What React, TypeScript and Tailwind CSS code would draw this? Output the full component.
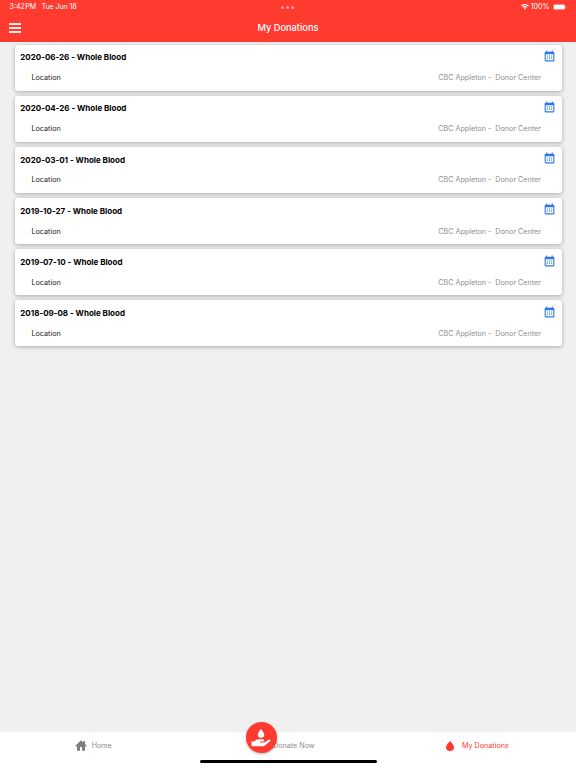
const donations = [
    "2020-06-26",
    "2020-04-26",
    "2020-03-01",
    "2019-10-27",
    "2019-07-10",
    "2018-09-08",
];

const CalendarIcon = () => {
    return (
        <svg viewBox="0 0 24 24" className="w-[13px] h-[13px] fill-[#2f75ee]">
            <path d="M9,10V12H7V10H9M13,10V12H11V10H13M17,10V12H15V10H17M19,3A2,2 0 0,1 21,5V19A2,2 0 0,1 19,21H5C3.89,21 3,20.1 3,19V5A2,2 0 0,1 5,3H6V1H8V3H16V1H18V3H19M19,19V8H5V19H19M9,14V16H7V14H9M13,14V16H11V14H13M17,14V16H15V14H17Z"/>
        </svg>
    )
}

const HomeIcon = () => {
    return (
        <svg viewBox="0 0 24 22" className="w-3 h-[11px] mr-[5px] mb-px fill-[#808080]">
            <path d="M12 0.500 0.500 11.500 2 13H4V21.500H10V14H14V21.500H20V13H22L23.500 11.500 20 8.200V2H16.500V4.800Z"/>
        </svg>
    )
}

const DropIcon = () => {
    return (
        <svg viewBox="0 0 16 20" className="w-2 h-[10px] mr-[8px] fill-[#ff3a2f]">
            <path d="M8 0C8 0 0 8 0 12.500A8 7.500 0 0 0 16 12.500C16 8 8 0 8 0Z"/>
        </svg>
    )
}

const DonateIcon = () => {
    return (
        <svg viewBox="0 0 40 36" className="w-5 h-[18px] fill-white">
            <path d="M20 0C20 0 13.500 8 13.500 11.500A6.500 6 0 0 0 26.500 11.500C26.500 8 20 0 20 0Z"/>
            <path d="M1 25H6L11 21.500Q13 20.500 15 20.500H24Q26.500 20.700 26.500 23Q26.500 25 24 25.200H18V27H27L34.500 21.800Q37 20.600 38.500 22Q39.500 23.500 37.500 25.200L27 33.500Q25.500 34.500 23.500 34.500H1Z"/>
        </svg>
    )
}

const StatusBar = () => {
    return (
        <div className="grid grid-cols-3 items-center h-[14px] px-[9.5px] text-[7.1px] leading-[14px]">
            <p className="flex whitespace-nowrap">
                <span className="w-[32px]">3:42<span className="ml-[0.5px]">PM</span></span>
                <span className="tracking-[-0.1px]">Tue Jun 18</span>
            </p>
            <p className="flex justify-center space-x-[2px]">
                <span className="w-[3px] h-[3px] rounded-full bg-white/50"/>
                <span className="w-[3px] h-[3px] rounded-full bg-white/50"/>
                <span className="w-[3px] h-[3px] rounded-full bg-white/50"/>
            </p>
            <div className="flex items-center justify-end">
                <svg viewBox="0 0 16 12" className="w-2 h-1.5 mr-[2px] fill-white">
                    <path d="M8 0C5 0 2.200 1.200.2 3.100l1.600 1.700A9 9 0 0 1 8 2.400a9 9 0 0 1 6.200 2.400l1.600-1.700A11.200 11.200 0 0 0 8 0Z"/>
                    <path d="M8 4a7.200 7.200 0 0 0-5 2l1.700 1.700A4.800 4.800 0 0 1 8 6.400a4.800 4.800 0 0 1 3.300 1.300L13 6a7.200 7.200 0 0 0-5-2Z"/>
                    <path d="M8 8a3.500 3.500 0 0 0-2.400 1L8 11.600 10.400 9A3.500 3.500 0 0 0 8 8Z"/>
                </svg>
                <span>100%</span>
                <svg viewBox="0 0 28 12" className="w-[14px] h-[6px] ml-[3px]">
                    <rect x="0.500" y="0.500" width="24" height="11" rx="3.500" fill="none" stroke="white" strokeOpacity="0.500"/>
                    <rect x="1.500" y="1.500" width="22" height="9" rx="2.500" fill="white"/>
                    <path d="M26 4v4c1.500-.6 1.500-3.400 0-4Z" fill="white" fillOpacity="0.500"/>
                </svg>
            </div>
        </div>
    )
}

const Header = () => {
    return (
        <header className="h-[42px] bg-[#ff3a2f] text-white">
            <StatusBar/>
            <div className="grid grid-cols-3 items-center h-[28px] px-[9px]">
                <button className="flex flex-col space-y-[2px] w-3">
                    <span className="w-3 h-[2px] bg-white/90"/>
                    <span className="w-3 h-[2px] bg-white/90"/>
                    <span className="w-3 h-[2px] bg-white/90"/>
                </button>
                <h1 className="text-center text-[9.25px] font-medium">My Donations</h1>
            </div>
        </header>
    )
}

const DonationCard = ({date}: {date: string}) => {
    return (
        <div className="h-[46px] rounded-[3px] bg-white shadow-[0_1px_4px_rgba(0,0,0,0.3)]">
            <div className="flex items-center justify-between h-[24px] px-[5.8px]">
                <p className="pt-[1.5px] text-[8px] font-bold text-black">{date} - Whole Blood</p>
                <CalendarIcon/>
            </div>
            <div className="flex items-center justify-between h-[20px] pl-[17px] pr-[20.5px] text-[7.2px]">
                <span className="text-[#222]">Location</span>
                <span className="whitespace-pre text-[#8e8e8e]">CBC Appleton -  Donor Center</span>
            </div>
        </div>
    )
}

const TabBar = () => {
    return (
        <nav className="h-[36px] bg-white text-[7.2px] text-[#8e8e8e]">
            <div className="relative grid grid-cols-3 h-[28px]">
                <a className="flex items-center justify-center pr-[5.5px]">
                    <HomeIcon/>
                    Home
                </a>
                <a className="flex items-center pl-[81px]">Donate Now</a>
                <a className="flex items-center pl-[62px] text-[#ff3a2f]">
                    <DropIcon/>
                    My Donations
                </a>
                <span className="absolute left-[246px] -top-[10px] flex items-center justify-center w-[31px] h-[31px] pr-px rounded-full bg-[#ff3a2f] shadow-[0_1px_3px_rgba(0,0,0,0.3)]">
                    <DonateIcon/>
                </span>
            </div>
            <div className="w-[177px] h-[3px] mx-auto rounded-full bg-black"/>
        </nav>
    )
}

const App = () => {
    return (
        <div className="flex flex-col w-full h-screen overflow-hidden bg-[#f0f0f0] font-['Inter','Liberation_Sans',sans-serif]">
            <Header/>
            <main className="flex-1 px-[14.5px] pt-[2.5px] space-y-[5.15px]">
                {donations.map((date) => (
                    <DonationCard key={date} date={date}/>
                ))}
            </main>
            <TabBar/>
        </div>
    )
}
export default App;
